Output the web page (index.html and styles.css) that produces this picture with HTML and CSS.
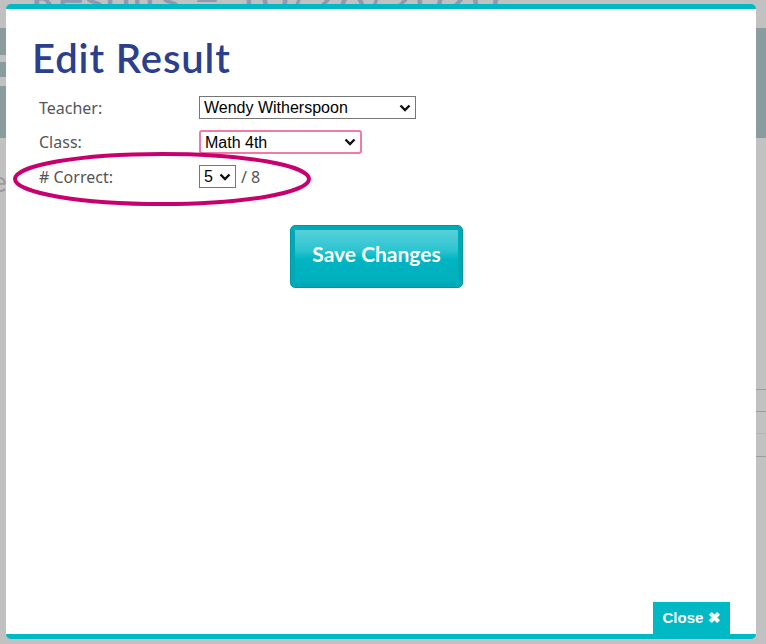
FILE: index.html
```html
<!DOCTYPE html>
<html>
<head>
<meta charset="utf-8">
<link rel="stylesheet" href="styles.css">
</head>
<body>
<div class="page">
  <div class="page-title">Results – 10/28/2020</div>
  <div class="band">
    <div class="band-gap g1"></div>
    <div class="band-gap g2"></div>
  </div>
  <div class="page-letter">e</div>
  <div class="rows">
    <div class="row-line"></div>
    <div class="row-line"></div>
    <div class="row-line faint"></div>
    <div class="row-line"></div>
  </div>
</div>

<div class="modal">
  <h1 class="modal-title">Edit Result</h1>
  <div class="form">
    <label class="lbl">Teacher:</label>
    <div class="ctl">
      <span class="selwrap">
        <select class="sel sel-teacher"><option>Wendy Witherspoon</option></select>
        <svg class="chev" width="12" height="8" viewBox="0 0 12 8"><path d="M1.5 1.5 L6 6 L10.5 1.5" fill="none" stroke="#111" stroke-width="2.4"/></svg>
      </span>
    </div>
    <label class="lbl">Class:</label>
    <div class="ctl">
      <span class="selwrap">
        <select class="sel sel-class"><option>Math 4th</option></select>
        <svg class="chev" width="12" height="8" viewBox="0 0 12 8"><path d="M1.5 1.5 L6 6 L10.5 1.5" fill="none" stroke="#111" stroke-width="2.4"/></svg>
      </span>
    </div>
    <label class="lbl">#&nbsp;Correct:</label>
    <div class="ctl">
      <span class="selwrap">
        <select class="sel sel-num"><option>5</option></select>
        <svg class="chev" width="12" height="8" viewBox="0 0 12 8"><path d="M1.5 1.5 L6 6 L10.5 1.5" fill="none" stroke="#111" stroke-width="2.4"/></svg>
      </span>
      <span class="total">/ 8</span>
    </div>
  </div>
  <svg class="ring" width="304" height="60" viewBox="0 0 304 60">
    <ellipse cx="152" cy="30" rx="147" ry="25" fill="none" stroke="#c8006f" stroke-width="4"/>
  </svg>
  <div class="actions">
    <button class="save">Save Changes</button>
  </div>
  <button class="close">Close <span class="x">✖</span></button>
</div>
</body>
</html>
```

FILE: styles.css
```css
html, body {
  margin: 0;
  padding: 0;
}
body {
  width: 766px;
  height: 644px;
  overflow: hidden;
  background: #c1c1c1;
  font-family: "Liberation Sans", Arial, sans-serif;
  position: relative;
}
.page {
  position: absolute;
  inset: 0;
}
.page-title {
  position: absolute;
  left: 30px;
  top: -32px;
  font-family: "Lato", sans-serif;
  font-size: 48px;
  color: #8e99b1;
  white-space: nowrap;
}
.band {
  position: absolute;
  left: 0;
  right: 0;
  top: 28px;
  height: 110px;
  background: #8a9c9e;
}
.band-gap {
  position: absolute;
  left: 0;
  width: 40px;
  background: #c1c1c1;
}
.g1 { top: 27px; height: 7px; }
.g2 { top: 49px; height: 9px; }
.page-letter {
  position: absolute;
  left: -8px;
  top: 164px;
  font-family: "Lato", sans-serif;
  font-size: 28px;
  color: #9a9a9a;
}
.rows {
  position: absolute;
  right: 0;
  top: 389px;
  width: 30px;
}
.row-line {
  height: 1px;
  background: #9c9c9c;
  margin-bottom: 21px;
}
.row-line.faint { background: #b6b6b6; margin-bottom: 22px; }

.modal {
  position: absolute;
  left: 6px;
  top: 4px;
  width: 750px;
  height: 625px;
  background: #fff;
  border-top: 5px solid #00b9c5;
  border-bottom: 5px solid #00b9c5;
  border-radius: 5px;
  box-sizing: content-box;
}
.modal-title {
  margin: 26px 0 0 26px;
  font-family: "Lato", sans-serif;
  font-weight: 600;
  font-size: 40px;
  line-height: 46px;
  color: #2b3f8c;
  letter-spacing: 0.9px;
}
.form {
  display: grid;
  grid-template-columns: 160px auto;
  row-gap: 11px;
  margin: 15px 0 0 33px;
  align-items: center;
}
.lbl {
  font-family: "Noto Sans", sans-serif;
  font-size: 16px;
  color: #555;
}
.ctl {
  display: flex;
  align-items: center;
  gap: 5px;
}
.selwrap {
  position: relative;
  display: inline-flex;
}
.chev {
  position: absolute;
  right: 5px;
  top: 8px;
  pointer-events: none;
}
.sel {
  -webkit-appearance: none;
  appearance: none;
  font-family: "Liberation Sans", Arial, sans-serif;
  font-size: 16px;
  color: #000;
  height: 23px;
  border: 1px solid #767676;
  border-radius: 0;
  background: #fff;
  padding: 0 4px;
  margin: 0;
  box-sizing: border-box;
}
.sel-teacher { width: 217px; }
.sel-class {
  width: 163px;
  border: 2px solid #f27aa9;
  border-radius: 3px;
  height: 24px;
}
.sel-class + .chev { top: 8px; right: 6px; }
.sel-num { width: 37px; padding-left: 4px; }
.total {
  font-family: "Noto Sans", sans-serif;
  font-size: 16px;
  color: #555;
}
.ring {
  position: absolute;
  left: 4px;
  top: 140px;
}
.actions {
  display: flex;
  justify-content: center;
  margin-top: 37px;
  padding-right: 9px;
}
.save {
  width: 173px;
  height: 63px;
  border: 1px solid #0096a2;
  border-radius: 5px;
  background: linear-gradient(#5fd3dd 0%, #2cc4cf 40%, #00b5c2 55%, #00aebb 100%);
  box-shadow: inset 0 0 0 4px #00a9b5;
  color: #fff;
  font-family: "Lato", sans-serif;
  font-weight: 700;
  font-size: 21px;
  padding: 0 0 6px 0;
  cursor: pointer;
}
.close {
  position: absolute;
  right: 26px;
  bottom: 0;
  width: 77px;
  height: 32px;
  border: 0;
  background: #00b9c5;
  color: #fff;
  font-family: "Liberation Sans", Arial, sans-serif;
  font-weight: 700;
  font-size: 15px;
  padding: 0;
}
.close .x { font-size: 15px; }
```
